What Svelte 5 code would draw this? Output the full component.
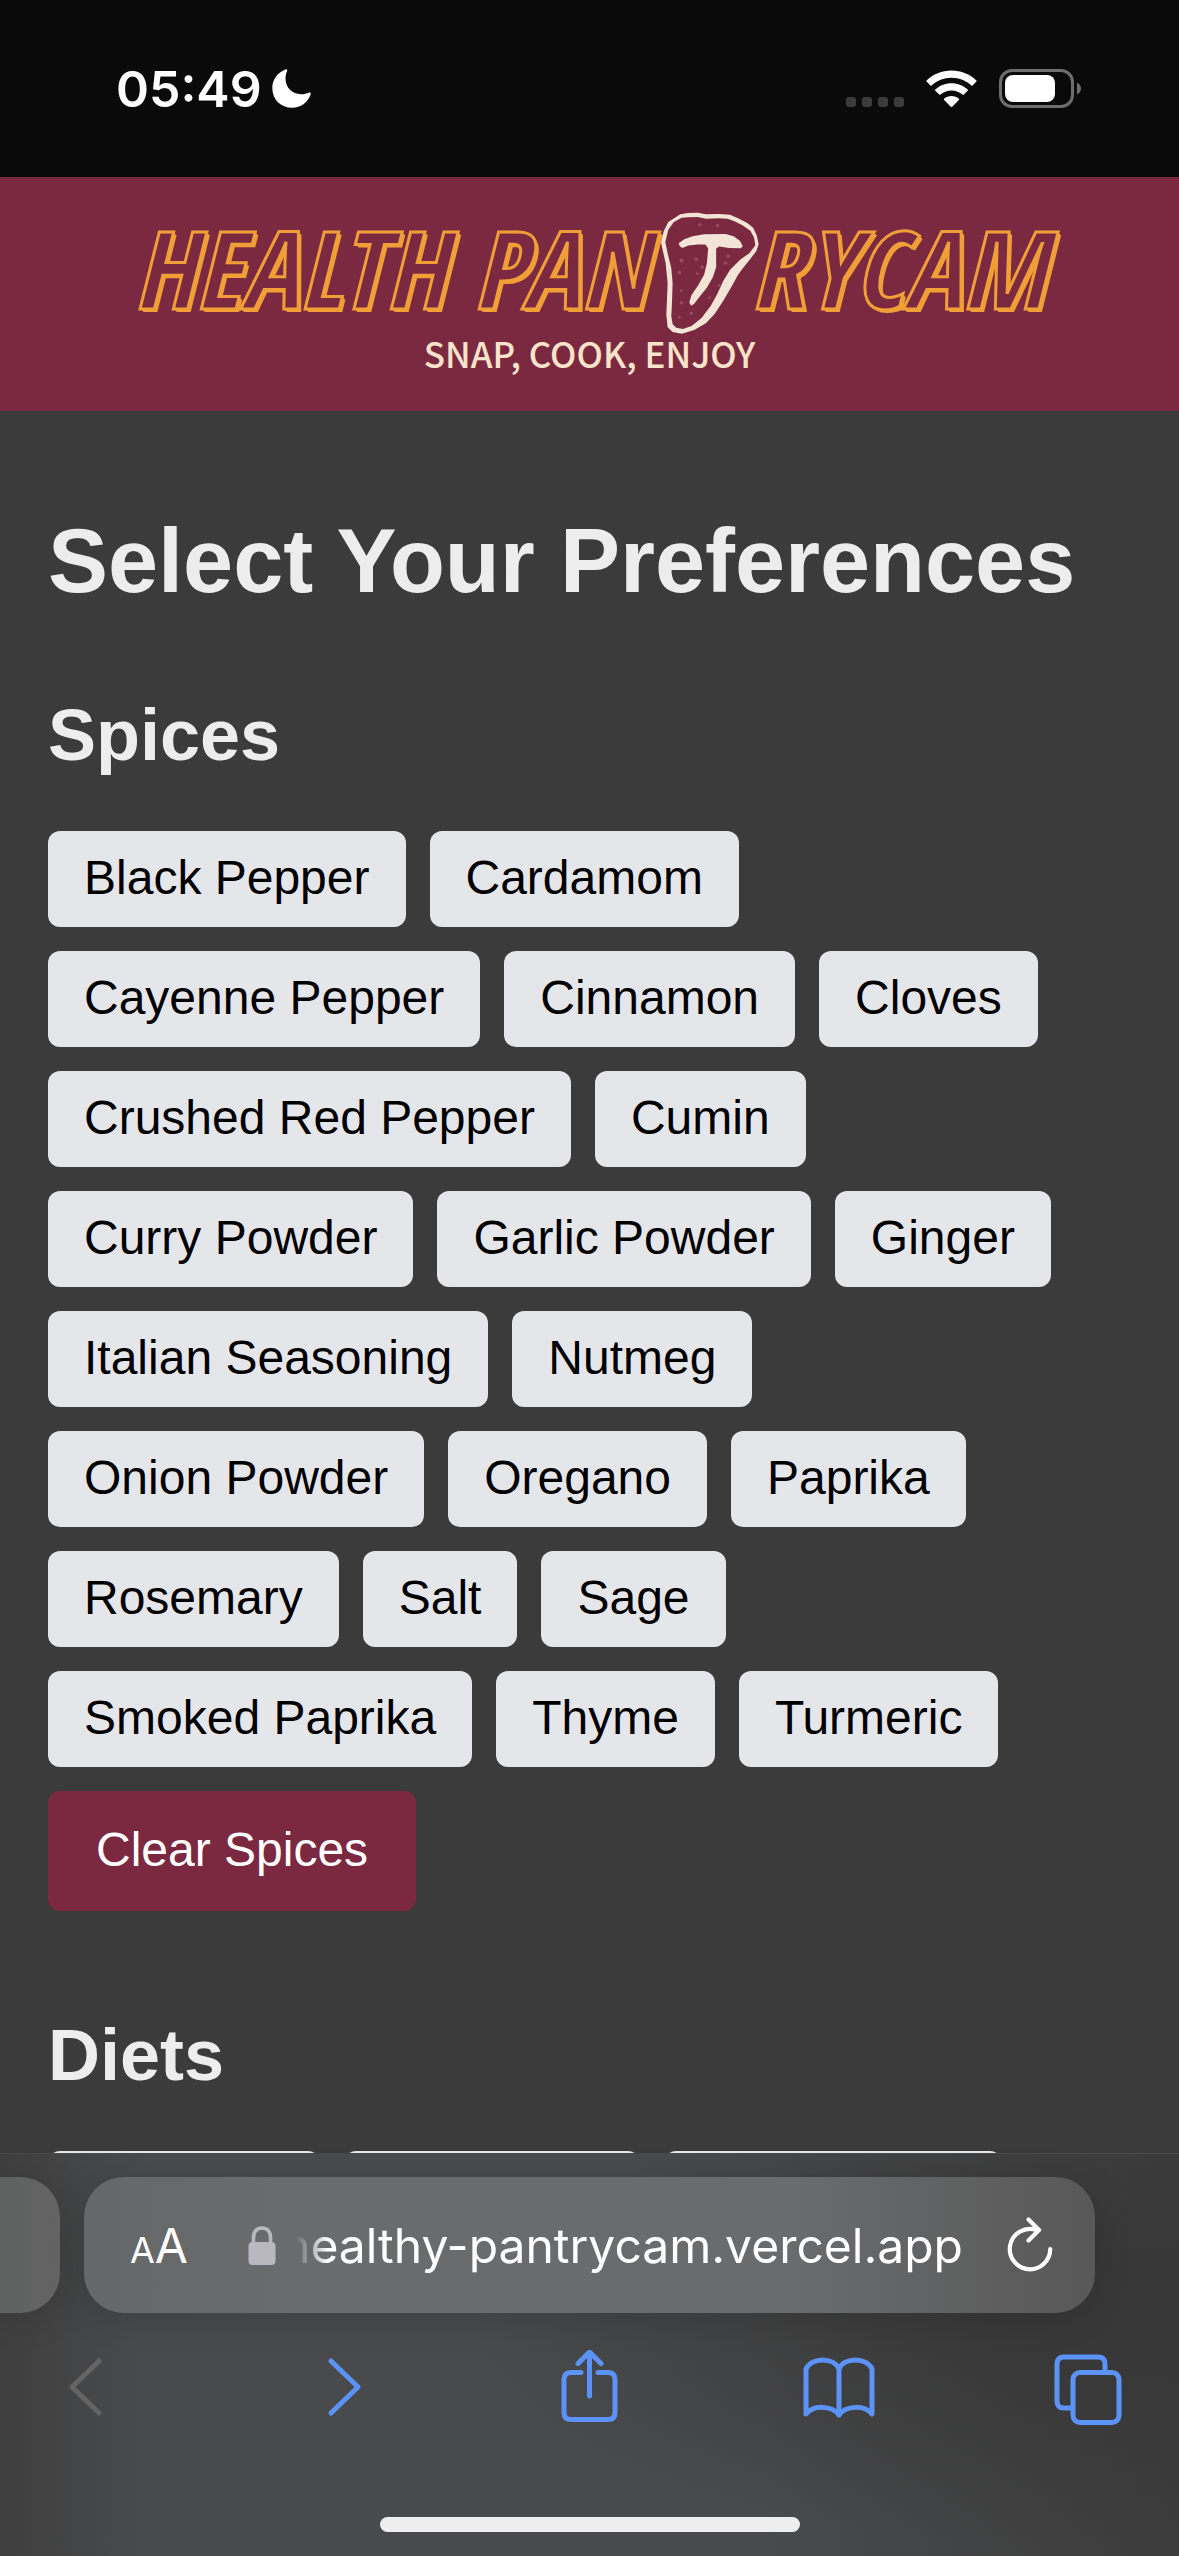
<script lang="ts">
	interface PreferenceGroup {
		title: string;
		options: string[];
		placeholders?: number[];
	}

	const groups: PreferenceGroup[] = [
		{
			title: 'Spices',
			options: [
				'Black Pepper',
				'Cardamom',
				'Cayenne Pepper',
				'Cinnamon',
				'Cloves',
				'Crushed Red Pepper',
				'Cumin',
				'Curry Powder',
				'Garlic Powder',
				'Ginger',
				'Italian Seasoning',
				'Nutmeg',
				'Onion Powder',
				'Oregano',
				'Paprika',
				'Rosemary',
				'Salt',
				'Sage',
				'Smoked Paprika',
				'Thyme',
				'Turmeric'
			]
		},
		{
			title: 'Diets',
			options: [],
			placeholders: [272, 296, 338]
		}
	];

	let selected = $state<string[]>([]);

	function toggle(option: string) {
		selected = selected.includes(option)
			? selected.filter((o) => o !== option)
			: [...selected, option];
	}

	function clearGroup(group: PreferenceGroup) {
		selected = selected.filter((o) => !group.options.includes(o));
	}
</script>

<div class="screen">
	<div class="status-bar">
		<div class="clock">
			<span>05:49</span>
			<svg width="39" height="39" viewBox="0 0 39 39" aria-hidden="true">
				<path
					fill="#fff"
					d="M13.6 0.4C14.6 0 15.6 0.8 15.1 2C14 4.4 13.5 6.9 13.5 9.6C13.5 18.9 20 25.2 29.2 25.2C32.2 25.2 34.7 24.6 36.8 23.7C38.2 23.1 39.1 24.1 38.6 25.5C35.7 33.6 28.6 38.7 20.2 38.7C8.7 38.7 0.3 30.3 0.3 18.9C0.3 10.5 5.6 3.2 13.6 0.4Z"
				/>
			</svg>
		</div>
		<div class="indicators">
			<svg width="58" height="38" viewBox="0 0 58 38" fill="#3a3a3a" aria-hidden="true">
				<rect x="0" y="27" width="10" height="10" rx="3" />
				<rect x="16" y="27" width="10" height="10" rx="3" />
				<rect x="32" y="27" width="10" height="10" rx="3" />
				<rect x="48" y="27" width="10" height="10" rx="3" />
			</svg>
			<svg width="51" height="38" viewBox="0 0 51 38" fill="#fff" aria-hidden="true">
				<path d="M25.5 0.5C35.2 0.5 44 4.3 50.4 10.4Q51 11 50.4 11.6L46.6 15.5Q46 16.1 45.4 15.5C40.2 10.7 33.2 7.8 25.5 7.8S10.8 10.7 5.6 15.5Q5 16.1 4.4 15.5L0.6 11.6Q0 11 0.6 10.4C7 4.3 15.8 0.5 25.5 0.5Z" />
				<path d="M25.5 13.3C31.8 13.3 37.5 15.7 41.7 19.6Q42.3 20.2 41.7 20.8L37.8 24.6Q37.2 25.2 36.6 24.6C33.7 22 29.8 20.4 25.5 20.4S17.3 22 14.4 24.6Q13.8 25.2 13.2 24.6L9.3 20.8Q8.7 20.2 9.3 19.6C13.5 15.7 19.2 13.3 25.5 13.3Z" />
				<path d="M25.5 26C28.3 26 30.9 27 32.9 28.7Q33.5 29.3 32.9 29.9L26.2 36.7Q25.5 37.4 24.8 36.7L18.1 29.9Q17.5 29.3 18.1 28.7C20.1 27 22.7 26 25.5 26Z" />
			</svg>
			<svg width="82" height="39" viewBox="0 0 82 39" aria-hidden="true">
				<rect x="1.5" y="1.5" width="72" height="36" rx="11.5" fill="none" stroke="#6e6e6e" stroke-width="3" />
				<rect x="6" y="6" width="50" height="27" rx="8" fill="#fff" />
				<path d="M78 13.5C80.5 14.8 82 17 82 19.5S80.5 24.2 78 25.5Z" fill="#6e6e6e" />
			</svg>
		</div>
	</div>

	<header>
		<div class="logo">
			<span>HEALTH PAN</span>
			<svg class="steak" width="99" height="123" viewBox="30 36 298 370" role="img" aria-label="T">
				<path
					fill="#f2e5d7"
					fill-rule="evenodd"
					d="M88 43L112 39L140 38L165 43L205 42L238 44L262 55L290 69L308 84L318 106L324 132L317 153L300 176L278 203L262 225L240 265L216 305L192 342L165 371L130 391L93 402L65 397L50 383L46 345L48 300L50 250L44 190L36 155L30 128L38 94L52 66ZM92 53L68 67L52 89L43 126L50 160L61 205L65 250L63 310L61 350L65 374L76 384L96 388L122 379L152 355L180 318L200 281L217 244L238 210L270 178L296 160L314 136L310 113L299 92L275 76L251 64L230 56L204 55L165 56L140 51L112 52Z"
				/>
				<path
					fill="#f2e5d7"
					d="M83 130L100 118L125 109L160 103L225 102L250 110L268 123L276 139L270 145L235 144L205 140L196 146L196 202L186 232L168 264L146 291L130 312L121 318L115 308L122 286L142 256L160 224L168 190L172 146L164 134L140 134L112 137L95 144L87 140Z"
				/>
				<g fill="#935066">
					<circle cx="147" cy="74" r="5" />
					<circle cx="200" cy="77" r="5" />
					<circle cx="92" cy="182" r="6" />
					<circle cx="136" cy="178" r="5" />
					<circle cx="232" cy="169" r="5" />
					<circle cx="224" cy="190" r="5" />
					<circle cx="86" cy="218" r="5" />
					<circle cx="139" cy="221" r="4" />
					<circle cx="154" cy="202" r="5" />
					<circle cx="205" cy="257" r="4" />
					<circle cx="91" cy="273" r="4" />
					<circle cx="92" cy="309" r="5" />
					<circle cx="176" cy="294" r="4" />
					<circle cx="121" cy="341" r="5" />
					<circle cx="86" cy="353" r="4" />
				</g>
			</svg>
			<span>RYCAM</span>
		</div>
		<p class="tagline">SNAP, COOK, ENJOY</p>
	</header>

	<main>
		<h1>Select Your Preferences</h1>
		{#each groups as group (group.title)}
			<section>
				<h2>{group.title}</h2>
				<div class="options">
					{#each group.options as option (option)}
						<button
							class="option"
							class:active={selected.includes(option)}
							aria-pressed={selected.includes(option)}
							onclick={() => toggle(option)}>{option}</button
						>
					{/each}
					{#each group.placeholders ?? [] as width}
						<div class="placeholder" style="width: {width}px"></div>
					{/each}
				</div>
				{#if group.options.length > 0}
					<button class="clear" onclick={() => clearGroup(group)}>Clear {group.title}</button>
				{/if}
			</section>
		{/each}
	</main>

	<footer>
		<div class="tabs-row">
			<button class="previous-tab" aria-label="Previous tab"></button>
			<div class="address-bar">
				<button class="text-size" aria-label="Page settings"><small>A</small>A</button>
				<button class="address">
					<svg width="28" height="39" viewBox="0 0 28 39" aria-hidden="true">
						<rect x="0.5" y="16" width="27" height="23" rx="4" fill="#b9b7c0" />
						<path d="M5.5 18V11.5C5.5 5.5 9 2 14 2S22.5 5.5 22.5 11.5V18" fill="none" stroke="#b9b7c0" stroke-width="3.6" />
					</svg>
					<span class="url">healthy-pantrycam.vercel.app</span>
				</button>
				<button class="reload" aria-label="Reload">
					<svg width="46" height="56" viewBox="0 0 46 56" aria-hidden="true">
						<path
							d="M29 12.8A20.2 20.2 0 1 0 43.2 32M21.5 2.5L32 13L21.5 23.5"
							fill="none"
							stroke="#fff"
							stroke-width="4.2"
							stroke-linecap="round"
							stroke-linejoin="round"
						/>
					</svg>
				</button>
			</div>
		</div>

		<nav>
			<button class="disabled" aria-label="Back" disabled>
				<svg viewBox="0 0 72 76"><path d="M45 11L18 37L45 63" /></svg>
			</button>
			<button aria-label="Forward">
				<svg viewBox="0 0 72 76"><path d="M27 11L54 37L27 63" /></svg>
			</button>
			<button aria-label="Share">
				<svg viewBox="0 0 72 76">
					<path d="M27 22.5H17Q10 22.5 10 29.5V62.5Q10 69.5 17 69.500H54Q61 69.5 61 62.5V29.5Q61 22.5 54 22.5H44" stroke-linecap="butt" />
					<path d="M35.5 46V2.5M24 13.5L35.5 2L47 13.5" />
				</svg>
			</button>
			<button aria-label="Bookmarks">
				<svg viewBox="0 0 72 76">
					<path d="M36 19C31 7 8.5 7 3 19V64C10 55 29 55 36 65C43 55 62 55 69 64V19C63.5 7 41 7 36 19ZM36 19V65" />
				</svg>
			</button>
			<button aria-label="Tabs">
				<svg viewBox="0 0 72 76">
					<path d="M52 20V14Q52 7 45 7H11Q4 7 4 14V51Q4 58 11 58H17" stroke-linecap="butt" />
					<rect x="20" y="22.5" width="46" height="50" rx="7" />
				</svg>
			</button>
		</nav>
		<div class="home-indicator"></div>
	</footer>
</div>

<style>
	:global(body) {
		margin: 0;
		background: #3b3b3b;
	}

	.screen {
		height: 100vh;
		display: flex;
		flex-direction: column;
		background: #3b3b3b;
		font-family: 'Liberation Sans', Arial, sans-serif;
		overflow: hidden;
	}

	button {
		border: none;
		padding: 0;
		background: none;
		color: inherit;
		font: inherit;
		cursor: pointer;
	}

	svg {
		display: block;
		flex-shrink: 0;
	}

	.status-bar {
		display: flex;
		justify-content: space-between;
		align-items: center;
		box-sizing: border-box;
		height: 177px;
		padding: 0 98px 0 116px;
		background: #0a0a0a;
	}

	.clock,
	.indicators {
		display: flex;
		align-items: center;
	}

	.clock {
		gap: 10px;
		color: #fff;
		font-family: Inter, sans-serif;
		font-size: 50px;
		font-weight: 600;
	}

	.indicators {
		gap: 22px;
	}

	header {
		padding: 35px 0 40px;
		background: #7b2940;
	}

	.logo {
		display: flex;
		justify-content: center;
		align-items: flex-start;
		font-family: 'Open Sans Condensed', 'Open Sans', sans-serif;
		font-size: 108px;
		font-weight: 700;
		font-style: italic;
		line-height: 112px;
		white-space: nowrap;
		color: #7b2940;
		-webkit-text-stroke: 3px #f09e37;
		text-shadow:
			1px 1px 0 #f09e37,
			2px 2px 0 #f09e37,
			3px 3px 0 #f09e37;
	}

	.steak {
		margin: 0 -10px 0 14px;
	}

	.tagline {
		margin: 0;
		font-family: 'Noto Sans CJK JP', sans-serif;
		font-size: 35px;
		font-weight: 500;
		line-height: 36px;
		text-align: center;
		color: #f9e4cb;
	}

	main {
		flex: 1;
		min-height: 0;
		padding: 98px 48px 0;
		overflow-y: auto;
		scrollbar-width: none;
		color: #ededed;
	}

	h1 {
		margin: 0;
		font-size: 90px;
		line-height: 104px;
	}

	h2 {
		margin: 80px 0 54px;
		font-size: 72px;
		line-height: 84px;
	}

	section + section h2 {
		margin-top: 102px;
	}

	.options {
		display: flex;
		flex-wrap: wrap;
		gap: 24px;
	}

	.option,
	.clear,
	.placeholder {
		border-radius: 12px;
		font-size: 48px;
		line-height: 48px;
	}

	.option {
		padding: 23px 36px 25px;
		background: #e5e6ea;
		color: #000;
	}

	.option.active {
		background: #f09e37;
	}

	.placeholder {
		height: 96px;
		background: #e5e6ea;
	}

	.clear {
		margin-top: 24px;
		padding: 35px 48px 37px;
		background: #7b2940;
		color: #fff;
	}

	footer {
		border-top: 1px solid #4a4a4a;
		background:
			radial-gradient(ellipse 60% 60% at 100% 40%, #383838 20%, transparent),
			linear-gradient(90deg, #3f3f3f, #494a4c 12%, #494a4c 65%, #3c3c3c);
		font-family: Inter, sans-serif;
	}

	.tabs-row {
		display: flex;
		gap: 24px;
		padding: 23px 84px 0 0;
	}

	.previous-tab {
		width: 60px;
		height: 136px;
		border-radius: 0 40px 40px 0;
		background: linear-gradient(90deg, #5f6060, #646464);
		box-shadow: 0 6px 36px rgba(0, 0, 0, 0.15);
	}

	.address-bar {
		flex: 1;
		min-width: 0;
		display: flex;
		align-items: center;
		height: 136px;
		box-sizing: border-box;
		padding: 0 42px 0 46px;
		border-radius: 40px;
		background: linear-gradient(90deg, #666768, #6a6b6d 20%, #6a6b6d 70%, #585858);
		box-shadow: 0 6px 36px rgba(0, 0, 0, 0.15);
		color: #fff;
		font-size: 48px;
	}

	.text-size small {
		font-size: 36px;
	}

	.address {
		flex: 1;
		min-width: 0;
		display: flex;
		align-items: center;
		justify-content: flex-end;
		gap: 20px;
		margin: 0 44px 0 60px;
	}

	.url {
		flex: 1;
		min-width: 0;
		display: flex;
		justify-content: flex-end;
		overflow: hidden;
		white-space: nowrap;
		mask-image: linear-gradient(90deg, transparent, #000 32px);
	}

	nav {
		display: flex;
		justify-content: space-between;
		padding: 37px 54px 0;
	}

	nav button {
		width: 72px;
		height: 76px;
		color: #5b93f8;
	}

	nav .disabled {
		color: #646464;
	}

	nav path,
	nav rect {
		fill: none;
		stroke: currentColor;
		stroke-width: 5px;
		stroke-linecap: round;
		stroke-linejoin: round;
	}

	.home-indicator {
		width: 420px;
		height: 15px;
		margin: 91px auto 24px;
		border-radius: 8px;
		background: #eee;
	}
</style>
